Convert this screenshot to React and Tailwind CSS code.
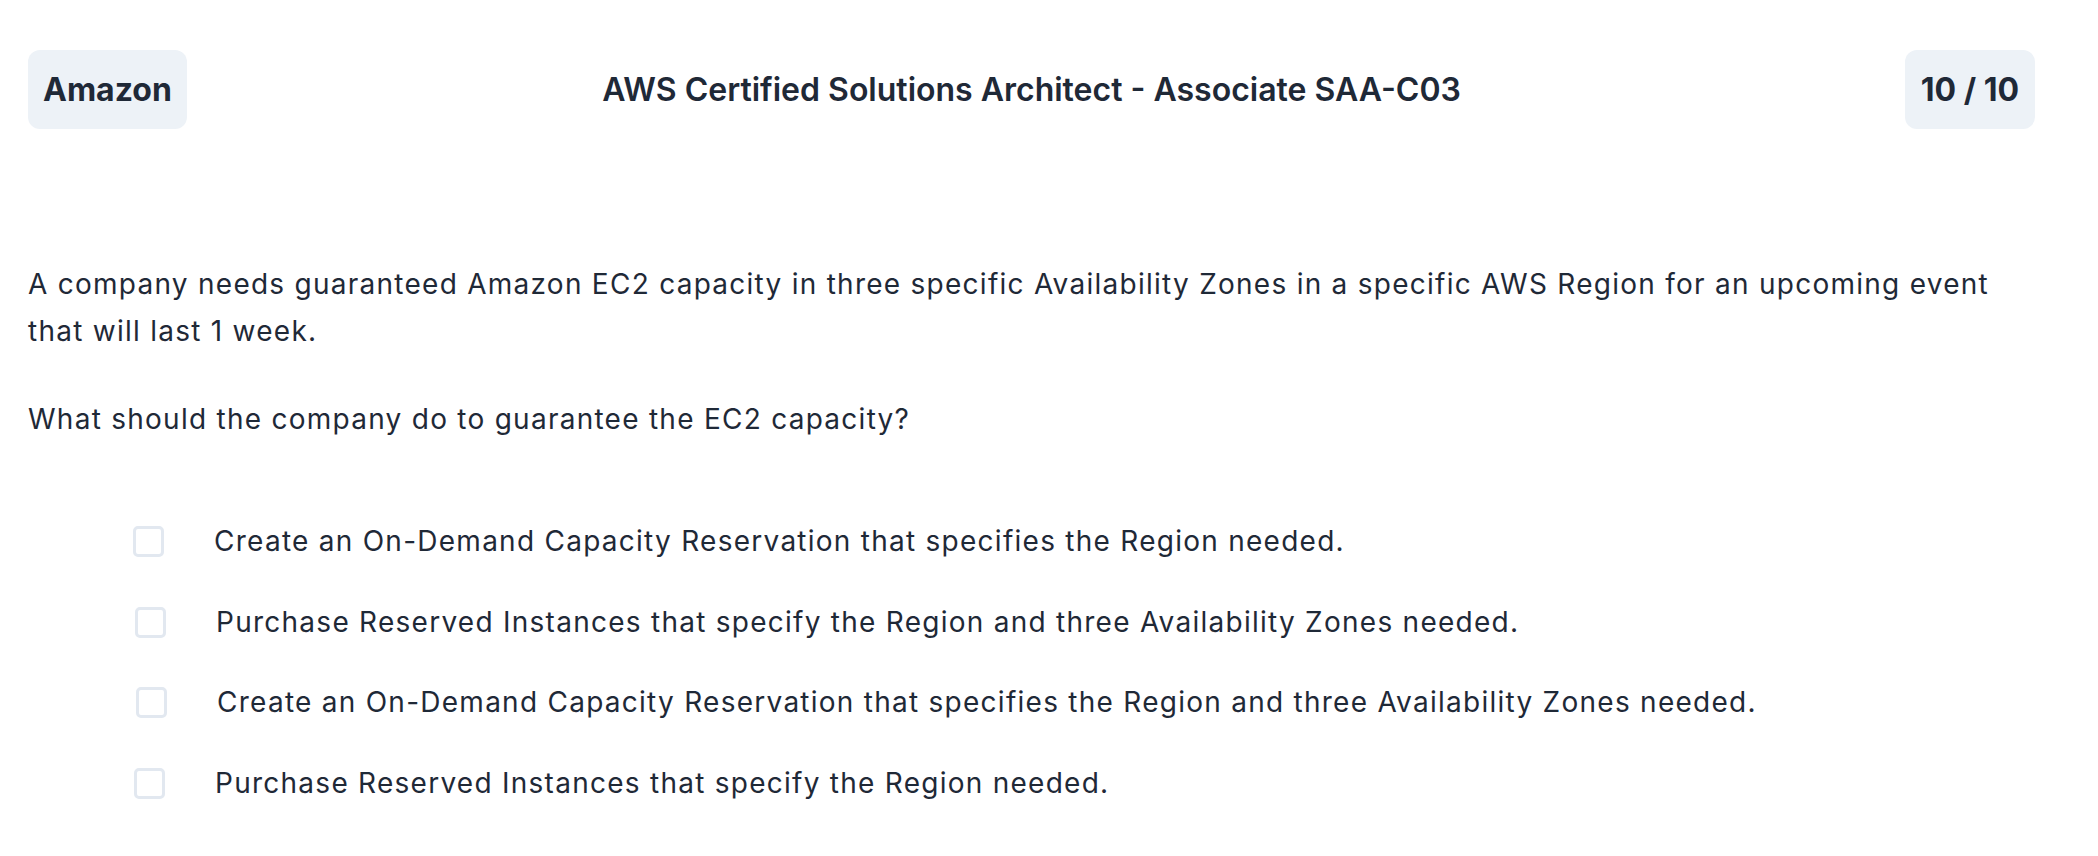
const options = [
  { text: 'Create an On-Demand Capacity Reservation that specifies the Region needed.', shift: 0 },
  { text: 'Purchase Reserved Instances that specify the Region and three Availability Zones needed.', shift: 2 },
  { text: 'Create an On-Demand Capacity Reservation that specifies the Region and three Availability Zones needed.', shift: 3 },
  { text: 'Purchase Reserved Instances that specify the Region needed.', shift: 1 },
];

export default function App() {
  return (
    <div className="min-h-screen bg-white pl-[28px] pr-[63px] pt-[50px] font-['Inter',sans-serif] text-[#1f2937]">
      <header className="grid grid-cols-[1fr_auto_1fr] items-center">
        <div className="justify-self-start flex h-[79px] items-center rounded-[12px] bg-[#edf2f7] px-[15px] text-[32px] font-bold">
          Amazon
        </div>
        <h1 className="text-[32px] font-semibold">AWS Certified Solutions Architect - Associate SAA-C03</h1>
        <div className="justify-self-end flex h-[79px] items-center rounded-[12px] bg-[#edf2f7] px-[16px] text-[32px] font-bold">
          10 / 10
        </div>
      </header>

      <main className="mt-[132px] text-[28px] leading-[46.67px] tracking-[1.26px]">
        <p>
          A company needs guaranteed Amazon EC2 capacity in three specific Availability Zones in a specific AWS Region for an upcoming event
          that will last 1 week.
        </p>
        <p className="mt-[42px]">What should the company do to guarantee the EC2 capacity?</p>

        <ul className="mt-[75px] flex flex-col gap-[34px] pl-[105px]">
          {options.map((o, i) => (
            <li key={i} className="flex items-center gap-[50px]" style={{ marginLeft: o.shift }}>
              <span className="h-[31px] w-[31px] shrink-0 rounded-[5px] border-[3px] border-[#e2e8f0] bg-white" />
              <span>{o.text}</span>
            </li>
          ))}
        </ul>
      </main>
    </div>
  );
}
